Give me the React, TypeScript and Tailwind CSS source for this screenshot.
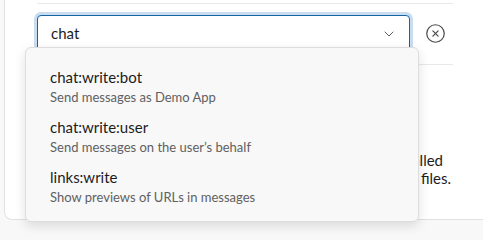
import React from 'react';
import { ChevronDown, CircleX } from 'lucide-react';

const scopes = [
  { name: 'chat:write:bot', desc: 'Send messages as Demo App' },
  { name: 'chat:write:user', desc: 'Send messages on the user’s behalf' },
  { name: 'links:write', desc: 'Show previews of URLs in messages' },
];

export default function App() {
  return (
    <div
      className="relative h-[240px] w-[483px] overflow-hidden bg-[#f8f8f8] pl-[4px] text-[#1d1c1d]"
      style={{ fontFamily: 'Lato, "Noto Sans", sans-serif' }}
    >
      {/* Card */}
      <div className="h-[220px] w-[600px] rounded-b-lg border border-t-0 border-[#e2e2e2] bg-white">
        <div className="ml-[32px] w-[416px]">
          <div className="h-[3px]" />
          <div className="h-px bg-[#e8e8e8]" />

          {/* Scope select row */}
          <div className="mt-[11px] flex items-center">
            <div className="flex h-[37px] w-[373px] items-center justify-between rounded-[4px] border border-[#1264a3] bg-white pl-[13px] pr-[12px] shadow-[0_0_0_3px_#c9dcf0]">
              <span className="text-[15px] leading-none">chat</span>
              <ChevronDown className="h-[16px] w-[16px] text-[#616061]" strokeWidth={1.5} />
            </div>
            <button className="ml-[15px] flex items-center text-[#4a4a4a]">
              <CircleX className="h-[21px] w-[21px]" strokeWidth={1.4} />
            </button>
          </div>

          <div className="mt-[12px] h-px bg-[#e8e8e8]" />

          {/* Text behind the menu */}
          <div className="mt-[86px] text-[15px] leading-[18px]">
            <div className="flex justify-end overflow-hidden whitespace-nowrap pr-[10px]">
              <span>Bot tokens let your app act as a bot user once it has been installed</span>
            </div>
            <div className="flex justify-end overflow-hidden whitespace-nowrap pr-[2px]">
              <span>in a workspace and never access messages or your files.</span>
            </div>
          </div>
        </div>
      </div>

      {/* Dropdown menu */}
      <div className="absolute left-[25px] top-[47px] h-[175px] w-[394px] rounded-[6px] border border-[#dddddd] bg-[#f8f8f8] pt-[13px] shadow-[0_4px_12px_rgba(0,0,0,0.12)]">
        {scopes.map((s) => (
          <div key={s.name} className="px-[24px] py-[5px]">
            <div className="text-[15px] leading-[22px] text-[#1d1c1d]">{s.name}</div>
            <div className="text-[13px] leading-[18px] text-[#616061]">{s.desc}</div>
          </div>
        ))}
      </div>
    </div>
  );
}
